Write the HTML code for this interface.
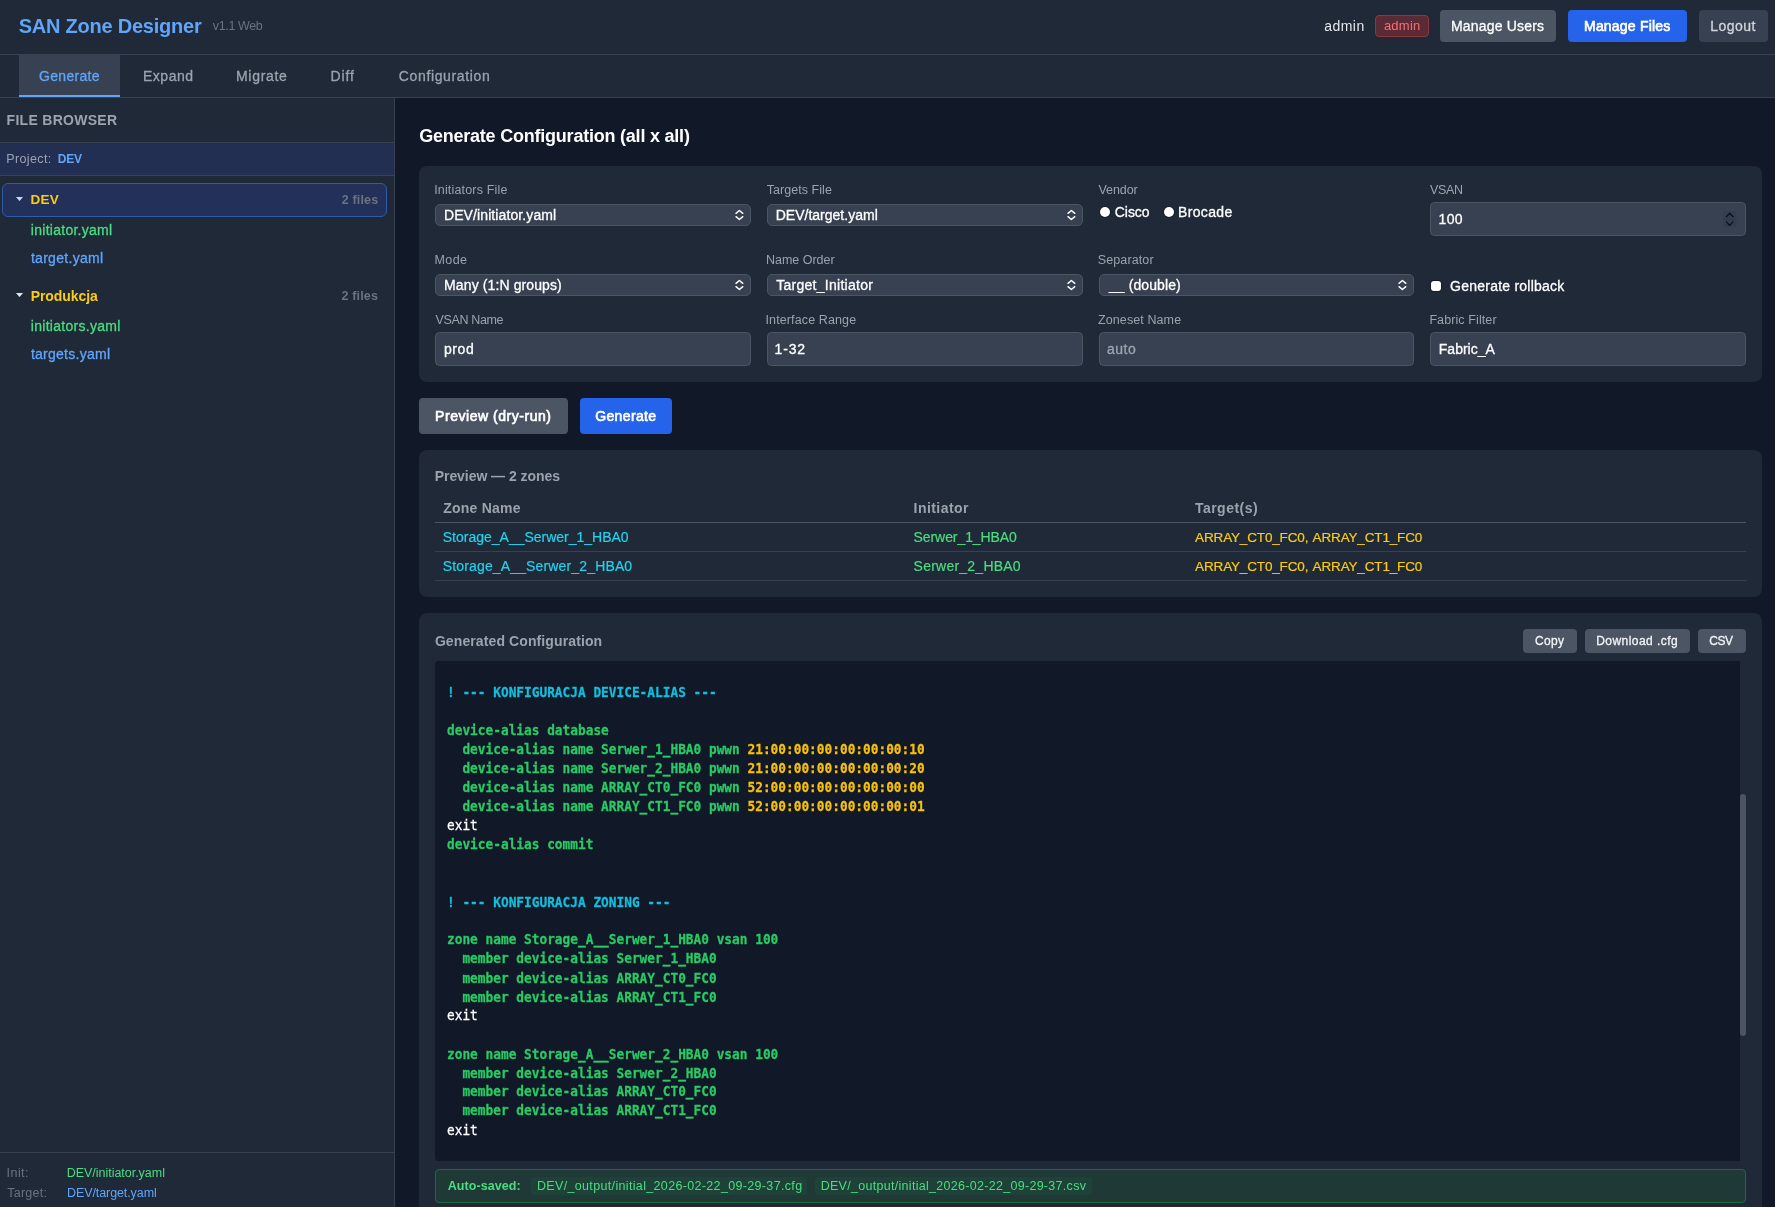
<!DOCTYPE html>
<html lang="en">
<head>
<meta charset="utf-8">
<title>SAN Zone Designer</title>
<style>
*{box-sizing:border-box;margin:0;padding:0}
html,body{width:1775px;height:1207px;overflow:hidden;background:#111827}
body{position:relative;font-family:"Liberation Sans",Arial,sans-serif;color:#f3f4f6;font-size:14px;-webkit-font-smoothing:antialiased}
.abs{position:absolute}
.t{position:absolute;white-space:nowrap;line-height:20px;height:20px}
/* ---------- header ---------- */
#hdr{left:0;top:0;width:1775px;height:55px;background:#1f2937;border-bottom:1px solid #374151}
#tabs{left:0;top:55px;width:1775px;height:43px;background:#1f2937;border-bottom:1px solid #374151}
.tab{position:absolute;top:0;height:42px;line-height:42px;text-align:center;color:#9ca3af;font-size:14px;border-bottom:2px solid transparent}
.tab.on{background:#374151;color:#60a5fa;border-bottom:2px solid #60a5fa}
.btn{position:absolute;border-radius:4px;text-align:center;color:#fff;white-space:nowrap}
/* ---------- sidebar ---------- */
#side{left:0;top:98px;width:395px;height:1109px;background:#1f2937;border-right:1px solid #374151}
/* ---------- main ---------- */
.card{position:absolute;background:#1f2937;border-radius:8px}
.lbl{position:absolute;white-space:nowrap;font-size:12.5px;line-height:16px;height:16px;color:#9ca3af}
.sel{position:absolute;height:22px;background:#374151;border:1px solid #4b5563;border-radius:5px;color:#fff;font-size:14px;line-height:20px;padding-left:8px;white-space:nowrap}
.inp{position:absolute;height:34px;background:#374151;border:1px solid #4b5563;border-radius:4.5px;color:#fff;font-size:14px;line-height:32px;padding-left:8px;white-space:nowrap}
.chev{position:absolute;right:5.8px;top:4px;width:9px;height:12px}
.btn.sm{height:24px;line-height:24px;font-size:12px;background:#4b5563;color:#f3f4f6}
#pre{position:absolute;left:12px;top:22px;transform:scaleY(1.07);transform-origin:0 0;font-family:"DejaVu Sans Mono","Liberation Mono",monospace;font-size:12.8px;font-weight:bold;line-height:17.785px;color:#fff;white-space:pre}
#pre .c{color:#12bfdf}#pre .g{color:#28cb65}#pre .y{color:#f7c00c}#pre .w{color:#fff;font-weight:normal}
#pre span{-webkit-text-stroke:0.25px currentColor}
.m,.tab,.sel,.inp,.btn{-webkit-text-stroke:0.3px currentColor}
#h-badge{-webkit-text-stroke:0}
#h-mf,#b-prev,#b-gen{font-weight:normal!important;-webkit-text-stroke:0.65px currentColor}
.m2{-webkit-text-stroke:0.2px currentColor}
/*FIT-START*/
#h-title{letter-spacing:-0.235px;margin-left:-0.27px}
#h-ver{letter-spacing:-0.379px;margin-left:-0.15px}
#h-user{letter-spacing:0.485px;margin-left:-0.83px}
#h-badge-t{letter-spacing:0.235px;margin-left:0.41px}
#h-mu-t{letter-spacing:0.177px;margin-left:-0.79px}
#h-mf-t{letter-spacing:0.203px;margin-left:-0.49px}
#h-lo-t{letter-spacing:0.45px;margin-left:-1.02px}
#t1{letter-spacing:0.324px;margin-left:-0.09px}
#t2{letter-spacing:0.485px;margin-left:-0.51px}
#t3{letter-spacing:0.691px;margin-left:-0.46px}
#t4{letter-spacing:0.873px;margin-left:0.31px}
#t5{letter-spacing:0.63px;margin-left:1.17px}
#s-fb{letter-spacing:0.29px;margin-left:-0.43px}
#s-pl{letter-spacing:0.369px;margin-left:-0.74px}
#s-pv{letter-spacing:-0.317px;margin-left:-0.15px}
#s-devn{letter-spacing:0.28px;margin-left:-0.63px}
#s-devc{letter-spacing:0.159px;margin-left:-0.31px}
#s-f1{letter-spacing:0.264px;margin-left:-0.15px}
#s-f2{letter-spacing:0.296px;margin-left:-0.13px}
#s-prn{letter-spacing:-0.068px;margin-left:-0.31px}
#s-prc{letter-spacing:0.166px;margin-left:-0.58px}
#s-f3{letter-spacing:0.273px;margin-left:-0.15px}
#s-f4{letter-spacing:0.267px;margin-left:-0.13px}
#s-il{letter-spacing:0.435px;margin-left:-0.42px}
#s-iv{letter-spacing:-0.029px;margin-left:-0.25px}
#s-tl{letter-spacing:0.232px;margin-left:0.3px}
#s-tv{letter-spacing:-0.092px;margin-left:0.02px}
#m-h{letter-spacing:-0.221px;margin-left:0.14px}
#l1{letter-spacing:0.167px;margin-left:-0.85px}
#l2{letter-spacing:0.045px;margin-left:-0.24px}
#l3{letter-spacing:-0.062px;margin-left:-0.58px}
#l4{letter-spacing:-0.378px;margin-left:0.05px}
#l5{letter-spacing:0.448px;margin-left:-0.62px}
#l6{letter-spacing:-0.017px;margin-left:-1.0px}
#l7{letter-spacing:0.129px;margin-left:-1.34px}
#l8{letter-spacing:-0.349px;margin-left:0.45px}
#l9{letter-spacing:0.115px;margin-left:-1.47px}
#l10{letter-spacing:0.1px;margin-left:-1.0px}
#l11{letter-spacing:0.099px;margin-left:-0.64px}
#i1-t{letter-spacing:0.1px;margin-left:-0.05px}
#i2-t{letter-spacing:0.01px;margin-left:-0.34px}
#i5-t{letter-spacing:0.109px;margin-left:0.1px}
#i6-t{letter-spacing:0.281px;margin-left:0.17px}
#i7-t{letter-spacing:0.102px;margin-left:0.88px}
#r1{letter-spacing:-0.05px;margin-left:-0.21px}
#r2{letter-spacing:0.328px;margin-left:-0.93px}
#i4-t{letter-spacing:0.306px;margin-left:-0.41px}
#cb{letter-spacing:0.226px;margin-left:0.12px}
#i8-t{letter-spacing:0.606px;margin-left:-0.09px}
#i9-t{letter-spacing:0.793px;margin-left:-1.41px}
#i10-t{letter-spacing:0.562px;margin-left:-1.09px}
#i11-t{letter-spacing:-0.001px;margin-left:-0.21px}
#b-prev-t{letter-spacing:0.535px;margin-left:-0.41px}
#b-gen-t{letter-spacing:0.341px;margin-left:-0.36px}
#p-h{letter-spacing:-0.051px;margin-left:-0.3px}
#th1{letter-spacing:0.226px;margin-left:0.2px}
#th2{letter-spacing:0.448px;margin-left:-0.45px}
#th3{letter-spacing:0.486px;margin-left:0.92px}
#z1{letter-spacing:-0.006px;margin-left:-0.23px}
#z2{letter-spacing:0.146px;margin-left:-0.23px}
#n1{letter-spacing:-0.078px;margin-left:-0.44px}
#n2{letter-spacing:0.235px;margin-left:-0.44px}
#g1{letter-spacing:-0.152px;margin-left:1.09px}
#g2{letter-spacing:-0.152px;margin-left:1.09px}
#g-h{letter-spacing:0.106px;margin-left:-0.14px}
#b-copy-t{letter-spacing:0.3px;margin-left:-0.82px}
#b-dl-t{letter-spacing:0.442px;margin-left:-0.72px}
#b-csv-t{letter-spacing:-0.356px;margin-left:-2.1px}
#as-l{letter-spacing:0.086px;margin-left:-0.39px}
#as-1{letter-spacing:0.34px;margin-left:-0.05px}
#as-2{letter-spacing:0.293px;margin-left:-0.33px}
/*FIT-END*/
</style>
</head>
<body>
<div id="layer" style="position:absolute;left:0;top:0;width:1775px;height:1207px;will-change:transform;transform:translateZ(0)">

<!-- ================= HEADER ================= -->
<div id="hdr" class="abs">
  <div class="t" id="h-title" style="left:19px;top:11px;height:30px;line-height:30px;font-size:20px;font-weight:bold;color:#60a5fa">SAN Zone Designer</div>
  <div class="t" id="h-ver" style="left:213px;top:16px;font-size:12.5px;color:#6b7280">v1.1 Web</div>
  <div class="t" id="h-user" style="left:1325px;top:16px;font-size:14px;color:#e5e7eb">admin</div>
  <div class="btn" id="h-badge" style="left:1375px;top:15px;width:54px;height:22px;line-height:20px;font-size:13px;color:#f87171;background:#5a2a35;border:1px solid #8d3640"><span id="h-badge-t">admin</span></div>
  <div class="btn" id="h-mu" style="left:1440px;top:10px;width:116px;height:32px;line-height:32px;font-size:14px;background:#4b5563"><span id="h-mu-t">Manage Users</span></div>
  <div class="btn" id="h-mf" style="left:1568px;top:10px;width:119px;height:32px;line-height:32px;font-size:14px;font-weight:bold;background:#2563eb"><span id="h-mf-t">Manage Files</span></div>
  <div class="btn" id="h-lo" style="left:1699px;top:10px;width:69px;height:32px;line-height:32px;font-size:14px;background:#374151;color:#d1d5db"><span id="h-lo-t">Logout</span></div>
</div>

<!-- ================= TABS ================= -->
<div id="tabs" class="abs">
  <div class="tab on" style="left:19px;width:101px"><span id="t1">Generate</span></div>
  <div class="tab" style="left:124px;width:89px"><span id="t2">Expand</span></div>
  <div class="tab" style="left:217px;width:90px"><span id="t3">Migrate</span></div>
  <div class="tab" style="left:311px;width:63px"><span id="t4">Diff</span></div>
  <div class="tab" style="left:379px;width:130px"><span id="t5">Configuration</span></div>
</div>

<!-- ================= SIDEBAR ================= -->
<div id="side" class="abs">
  <!-- coordinates inside #side are page-y minus 98 -->
  <div class="t" id="s-fb" style="left:7px;top:12px;font-size:14px;font-weight:bold;color:#9ca3af">FILE BROWSER</div>
  <div class="abs" id="s-proj" style="left:0;top:44px;width:394px;height:34px;background:#222f52;border-top:1px solid #374151;border-bottom:1px solid #2340a0"></div>
  <div class="t" id="s-pl" style="left:7px;top:51px;font-size:12.5px;color:#9ca3af">Project:</div>
  <div class="t" id="s-pv" style="left:58px;top:51px;font-size:12px;font-weight:bold;color:#60a5fa">DEV</div>

  <div class="abs" id="s-dev" style="left:2px;top:85px;width:385px;height:34px;background:#22305a;border:1px solid #2f5caa;border-radius:6px"></div>
  <svg class="abs" style="left:15.5px;top:98.5px" width="7" height="4" viewBox="0 0 7 4"><path d="M0.4 0h6.2L3.5 3.8z" fill="#bfdbfe" stroke="#bfdbfe" stroke-width="0.6" stroke-linejoin="round"/></svg>
  <div class="t" id="s-devn" style="left:31px;top:92px;font-size:13.5px;font-weight:bold;color:#facc15">DEV</div>
  <div class="t" id="s-devc" style="left:342px;top:92px;font-size:12.5px;font-weight:bold;color:#6b7280">2 files</div>
  <div class="t m" id="s-f1" style="left:31px;top:122px;font-size:14px;color:#4ade80">initiator.yaml</div>
  <div class="t m" id="s-f2" style="left:31px;top:150px;font-size:14px;color:#60a5fa">target.yaml</div>

  <svg class="abs" style="left:15.5px;top:194.7px" width="7" height="4" viewBox="0 0 7 4"><path d="M0.4 0h6.2L3.5 3.8z" fill="#e5e7eb" stroke="#e5e7eb" stroke-width="0.6" stroke-linejoin="round"/></svg>
  <div class="t" id="s-prn" style="left:31px;top:188px;font-size:14px;font-weight:bold;color:#facc15">Produkcja</div>
  <div class="t" id="s-prc" style="left:342px;top:188px;font-size:12.5px;font-weight:bold;color:#6b7280">2 files</div>
  <div class="t m" id="s-f3" style="left:31px;top:218px;font-size:14px;color:#4ade80">initiators.yaml</div>
  <div class="t m" id="s-f4" style="left:31px;top:246px;font-size:14px;color:#60a5fa">targets.yaml</div>

  <div class="abs" style="left:0;top:1054px;width:394px;height:1px;background:#374151"></div>
  <div class="t" id="s-il" style="left:7px;top:1064.5px;font-size:12.5px;color:#6b7280">Init:</div>
  <div class="t" id="s-iv" style="left:67px;top:1064.5px;font-size:12.5px;color:#4ade80">DEV/initiator.yaml</div>
  <div class="t" id="s-tl" style="left:7px;top:1084.5px;font-size:12.5px;color:#6b7280">Target:</div>
  <div class="t" id="s-tv" style="left:67px;top:1084.5px;font-size:12.5px;color:#60a5fa">DEV/target.yaml</div>
</div>

<!-- ================= MAIN ================= -->
<div id="main" class="abs" style="left:0;top:0;width:1775px;height:1207px;pointer-events:none">
  <!-- coordinates inside #main are page coordinates -->
  <div class="t" id="m-h" style="left:419px;top:122px;height:28px;line-height:28px;font-size:18px;font-weight:bold;color:#fff">Generate Configuration (all x all)</div>

  <!-- form card -->
  <div class="card" id="c-form" style="left:419px;top:166px;width:1343px;height:216px"></div>

  <div class="lbl" id="l1" style="left:435px;top:182px">Initiators File</div>
  <div class="lbl" id="l2" style="left:767px;top:182px">Targets File</div>
  <div class="lbl" id="l3" style="left:1099px;top:182px">Vendor</div>
  <div class="lbl" id="l4" style="left:1430px;top:182px">VSAN</div>

  <div class="sel" id="i1" style="left:435px;top:204px;width:316px"><span id="i1-t">DEV/initiator.yaml</span><svg class="chev" viewBox="0 0 9 12"><path d="M1 4.35L4.4 1.5L7.8 4.35M1 7.65L4.4 10.5L7.8 7.65" fill="none" stroke="#fff" stroke-width="1.4" stroke-linecap="round" stroke-linejoin="round"/></svg></div>
  <div class="sel" id="i2" style="left:767px;top:204px;width:316px"><span id="i2-t">DEV/target.yaml</span><svg class="chev" viewBox="0 0 9 12"><path d="M1 4.35L4.4 1.5L7.8 4.35M1 7.65L4.4 10.5L7.8 7.65" fill="none" stroke="#fff" stroke-width="1.4" stroke-linecap="round" stroke-linejoin="round"/></svg></div>

  <div class="abs" style="left:1100px;top:207px;width:10px;height:10px;border-radius:50%;background:#fff;box-shadow:0 0 0 0.7px rgba(8,12,20,.55)"></div>
  <div class="t m" id="r1" style="left:1115px;top:202px;font-size:14px;color:#fff">Cisco</div>
  <div class="abs" style="left:1164px;top:207px;width:10px;height:10px;border-radius:50%;background:#fff;box-shadow:0 0 0 0.7px rgba(8,12,20,.55)"></div>
  <div class="t m" id="r2" style="left:1179px;top:202px;font-size:14px;color:#fff">Brocade</div>

  <div class="inp" id="i4" style="left:1430px;top:202px;width:316px"><span id="i4-t">100</span><svg class="abs" style="right:8.4px;top:7.5px" width="13.2" height="16.7" viewBox="0 0 13.2 16.7"><rect x="0" y="0" width="13.2" height="16.7" rx="2.5" fill="#333d4d"/><rect x="1.5" y="8" width="10.2" height="0.8" fill="#303949"/><path d="M3.4 5.8L6.7 2.3L10.1 5.8M3.4 10.9L6.7 14.4L10.1 10.9" fill="none" stroke="#0c111b" stroke-width="1.3" stroke-linecap="round" stroke-linejoin="round"/></svg></div>

  <div class="lbl" id="l5" style="left:435px;top:252px">Mode</div>
  <div class="lbl" id="l6" style="left:767px;top:252px">Name Order</div>
  <div class="lbl" id="l7" style="left:1099px;top:252px">Separator</div>

  <div class="sel" id="i5" style="left:435px;top:274px;width:316px"><span id="i5-t">Many (1:N groups)</span><svg class="chev" viewBox="0 0 9 12"><path d="M1 4.35L4.4 1.5L7.8 4.35M1 7.65L4.4 10.5L7.8 7.65" fill="none" stroke="#fff" stroke-width="1.4" stroke-linecap="round" stroke-linejoin="round"/></svg></div>
  <div class="sel" id="i6" style="left:767px;top:274px;width:316px"><span id="i6-t">Target_Initiator</span><svg class="chev" viewBox="0 0 9 12"><path d="M1 4.35L4.4 1.5L7.8 4.35M1 7.65L4.4 10.5L7.8 7.65" fill="none" stroke="#fff" stroke-width="1.4" stroke-linecap="round" stroke-linejoin="round"/></svg></div>
  <div class="sel" id="i7" style="left:1099px;top:274px;width:315px"><span id="i7-t">__ (double)</span><svg class="chev" viewBox="0 0 9 12"><path d="M1 4.35L4.4 1.5L7.8 4.35M1 7.65L4.4 10.5L7.8 7.65" fill="none" stroke="#fff" stroke-width="1.4" stroke-linecap="round" stroke-linejoin="round"/></svg></div>

  <div class="abs" style="left:1431px;top:281px;width:10px;height:10px;border-radius:3px;background:#fff;box-shadow:0 0 0 0.7px rgba(8,12,20,.55)"></div>
  <div class="t m" id="cb" style="left:1450px;top:276px;font-size:14px;color:#fff">Generate rollback</div>

  <div class="lbl" id="l8" style="left:435px;top:312px">VSAN Name</div>
  <div class="lbl" id="l9" style="left:767px;top:312px">Interface Range</div>
  <div class="lbl" id="l10" style="left:1099px;top:312px">Zoneset Name</div>
  <div class="lbl" id="l11" style="left:1430px;top:312px">Fabric Filter</div>

  <div class="inp" id="i8" style="left:435px;top:332px;width:316px"><span id="i8-t">prod</span></div>
  <div class="inp" id="i9" style="left:767px;top:332px;width:316px"><span id="i9-t">1-32</span></div>
  <div class="inp" id="i10" style="left:1099px;top:332px;width:315px;color:#9ca3af"><span id="i10-t">auto</span></div>
  <div class="inp" id="i11" style="left:1430px;top:332px;width:316px"><span id="i11-t">Fabric_A</span></div>

  <!-- action buttons -->
  <div class="btn" id="b-prev" style="left:419px;top:398px;width:149px;height:36px;line-height:36px;font-size:14px;font-weight:bold;background:#4b5563"><span id="b-prev-t">Preview (dry-run)</span></div>
  <div class="btn" id="b-gen" style="left:580px;top:398px;width:92px;height:36px;line-height:36px;font-size:14px;font-weight:bold;background:#2563eb"><span id="b-gen-t">Generate</span></div>

  <div class="card" id="c-prev" style="left:419px;top:450px;width:1343px;height:147px"></div>
  <div class="t" id="p-h" style="left:435px;top:466px;font-size:14px;font-weight:bold;color:#9ca3af">Preview — 2 zones</div>
  <div class="t" id="th1" style="left:443px;top:498px;font-size:14px;font-weight:bold;color:#9ca3af">Zone Name</div>
  <div class="t" id="th2" style="left:914px;top:498px;font-size:14px;font-weight:bold;color:#9ca3af">Initiator</div>
  <div class="t" id="th3" style="left:1194px;top:498px;font-size:14px;font-weight:bold;color:#9ca3af">Target(s)</div>
  <div class="abs" style="left:435px;top:522px;width:1311px;height:1px;background:#4b5563"></div>
  <div class="t m2" id="z1" style="left:443px;top:527px;font-size:14px;color:#22d3ee">Storage_A__Serwer_1_HBA0</div>
  <div class="t m2" id="n1" style="left:914px;top:527px;font-size:14px;color:#4ade80">Serwer_1_HBA0</div>
  <div class="t m2" id="g1" style="left:1194px;top:527.5px;font-size:13.5px;word-spacing:1.5px;color:#facc15">ARRAY_CT0_FC0, ARRAY_CT1_FC0</div>
  <div class="abs" style="left:435px;top:551px;width:1311px;height:1px;background:#374151"></div>
  <div class="t m2" id="z2" style="left:443px;top:556px;font-size:14px;color:#22d3ee">Storage_A__Serwer_2_HBA0</div>
  <div class="t m2" id="n2" style="left:914px;top:556px;font-size:14px;color:#4ade80">Serwer_2_HBA0</div>
  <div class="t m2" id="g2" style="left:1194px;top:556.5px;font-size:13.5px;word-spacing:1.5px;color:#facc15">ARRAY_CT0_FC0, ARRAY_CT1_FC0</div>
  <div class="abs" style="left:435px;top:580px;width:1311px;height:1px;background:#374151"></div>
  <div class="card" id="c-cfg" style="left:419px;top:613px;width:1343px;height:620px"></div>
  <div class="t" id="g-h" style="left:435px;top:631px;font-size:14px;font-weight:bold;color:#9ca3af">Generated Configuration</div>
  <div class="btn sm" id="b-copy" style="left:1523px;top:629px;width:54px"><span id="b-copy-t">Copy</span></div>
  <div class="btn sm" id="b-dl" style="left:1585px;top:629px;width:105px"><span id="b-dl-t">Download .cfg</span></div>
  <div class="btn sm" id="b-csv" style="left:1698px;top:629px;width:48px"><span id="b-csv-t">CSV</span></div>

  <div class="abs" id="code" style="left:435px;top:661px;width:1305px;height:500px;background:#111827;border-radius:4px 0 0 4px;overflow:hidden">
<pre id="pre"><span class="c">! --- KONFIGURACJA DEVICE-ALIAS ---</span>

<span class="g" id="ln1">device-alias database</span>
<span class="g" id="ln2">  device-alias name Serwer_1_HBA0 pwwn <span class="y">21:00:00:00:00:00:00:10</span></span>
<span class="g">  device-alias name Serwer_2_HBA0 pwwn <span class="y">21:00:00:00:00:00:00:20</span></span>
<span class="g">  device-alias name ARRAY_CT0_FC0 pwwn <span class="y">52:00:00:00:00:00:00:00</span></span>
<span class="g">  device-alias name ARRAY_CT1_FC0 pwwn <span class="y">52:00:00:00:00:00:00:01</span></span>
<span class="w">exit</span>
<span class="g">device-alias commit</span>


<span class="c">! --- KONFIGURACJA ZONING ---</span>

<span class="g">zone name Storage_A__Serwer_1_HBA0 vsan 100</span>
<span class="g">  member device-alias Serwer_1_HBA0</span>
<span class="g">  member device-alias ARRAY_CT0_FC0</span>
<span class="g">  member device-alias ARRAY_CT1_FC0</span>
<span class="w">exit</span>

<span class="g">zone name Storage_A__Serwer_2_HBA0 vsan 100</span>
<span class="g">  member device-alias Serwer_2_HBA0</span>
<span class="g">  member device-alias ARRAY_CT0_FC0</span>
<span class="g">  member device-alias ARRAY_CT1_FC0</span>
<span class="w">exit</span></pre>
  </div>
  <div class="abs" id="thumb" style="left:1740px;top:794px;width:6px;height:242px;border-radius:3px;background:#4b5563"></div>

  <div class="abs" id="as" style="left:435px;top:1169px;width:1311px;height:34px;background:#1f3a36;border:1px solid #1c6b3f;border-radius:4px"></div>
  <div class="t" id="as-l" style="left:448px;top:1176px;font-size:12.5px;font-weight:bold;color:#4ade80">Auto-saved:</div>
  <div class="abs" style="left:531px;top:1177px;width:276px;height:18px;border-radius:4px;background:#1e4238"></div>
  <div class="t" id="as-1" style="left:537px;top:1176px;font-size:12.5px;color:#4ade80">DEV/_output/initial_2026-02-22_09-29-37.cfg</div>
  <div class="abs" style="left:815px;top:1177px;width:277px;height:18px;border-radius:4px;background:#1e4238"></div>
  <div class="t" id="as-2" style="left:821px;top:1176px;font-size:12.5px;color:#4ade80">DEV/_output/initial_2026-02-22_09-29-37.csv</div>
</div>

</div>
</body>
</html>
